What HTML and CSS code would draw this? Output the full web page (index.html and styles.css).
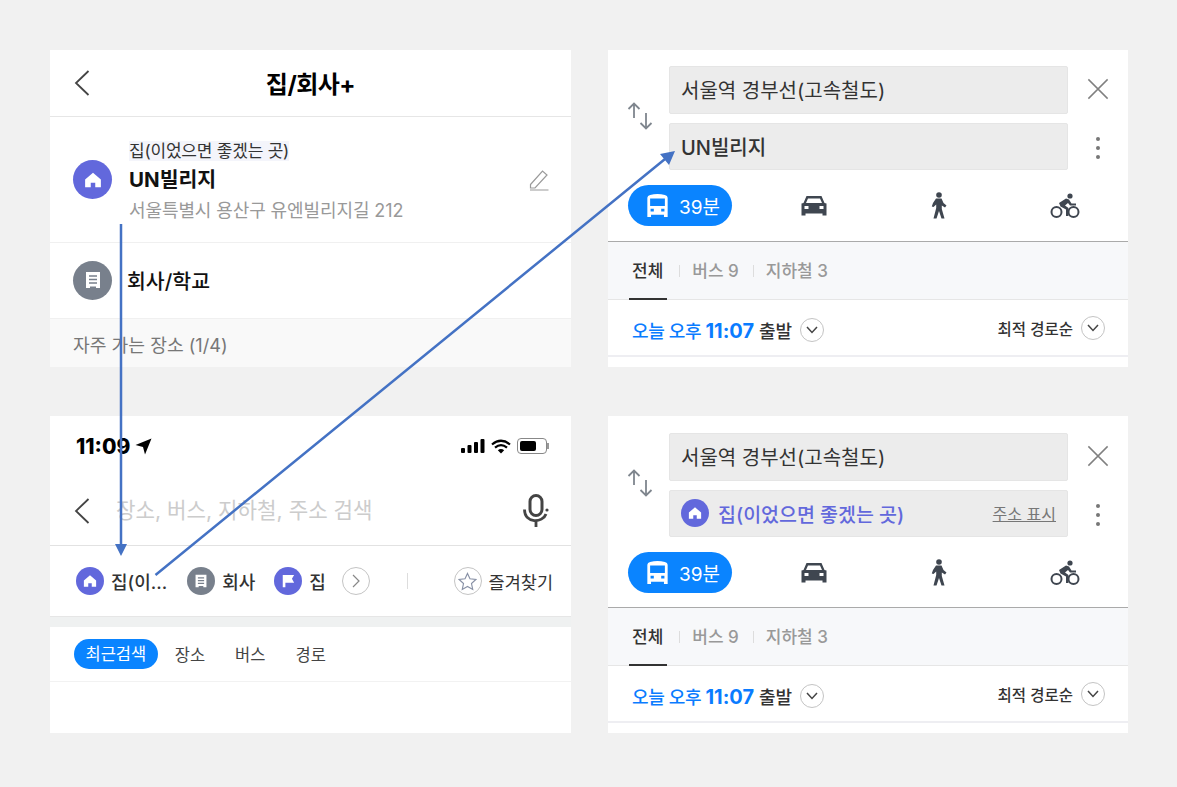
FILE: index.html
```html
<!DOCTYPE html>
<html lang="ko">

<head>
    <meta charset="UTF-8">
    <meta name="viewport" content="width=device-width, initial-scale=1.0">
    <title>집/회사+</title>
    <link rel="stylesheet" href="styles.css">
</head>

<body>
    <svg class="defs" width="0" height="0">
        <symbol id="i-back" viewBox="0 0 16 28"><path d="M14.5 2 2 14l12.500 12" fill="none" stroke="currentColor" stroke-width="1.800"/></symbol>
        <symbol id="i-home" viewBox="0 0 16 16"><path d="M8 1.500 15 7.500V14.500H10V10.500H6V14.500H1V7.500Z" fill="#fff"/></symbol>
        <symbol id="i-doc" viewBox="0 0 16 18"><path d="M1 1H15V17H11V15.500H5V17H1Z" fill="#fff"/><path d="M4 5H12M4 8.500H12M4 12H12" stroke="#78808c" stroke-width="1.500"/></symbol>
        <symbol id="i-swap" viewBox="0 0 26 28"><path d="M7 1.500V16M1.500 7 7 1.500 12.500 7M19 11V26.500M13.500 21 19 26.500 24.500 21" fill="none" stroke="#7f868e" stroke-width="1.800"/></symbol>
        <symbol id="i-close" viewBox="0 0 24 24"><path d="M1.500 1.500 22.500 22.500M22.500 1.500 1.500 22.500" stroke="#808080" stroke-width="1.600"/></symbol>
        <symbol id="i-more" viewBox="0 0 6 24"><circle cx="3" cy="3" r="2" fill="#777"/><circle cx="3" cy="12" r="2" fill="#777"/><circle cx="3" cy="21" r="2" fill="#777"/></symbol>
        <symbol id="i-bus" viewBox="0 0 22 26"><path fill-rule="evenodd" d="M3 1Q11-1 19 1 22 1.500 22 4V25H18V22.500H4V25H0V4Q0 1.500 3 1ZM3 5V13H19V5ZM3.500 16V19H7V16ZM15 16V19H18.500V16Z" fill="#fff"/></symbol>
        <symbol id="i-car" viewBox="0 0 26 20"><path fill-rule="evenodd" d="M5.500 0H20.500L23.500 7 25.500 7.500V19.500H21.500V17.500H4.500V19.500H.5V7.500L2.500 7ZM7 2.500 5 7H21L19 2.500ZM3.500 10V13H7.500V10ZM18.500 10V13H22.500V10Z" fill="#3f4650"/></symbol>
        <symbol id="i-walk" viewBox="0 0 16 27"><circle cx="8" cy="3" r="2.800" fill="#3f4650"/><path d="M5 6.500H10.500L12.500 11 15.500 13.500 14 15.500 10.800 13.500 10.800 17 13.500 26.500H10.500L8 19 5.500 26.500H2.500L5.200 16V12.500L2.500 15 .8 14.500 2 11Z" fill="#3f4650"/></symbol>
        <symbol id="i-bike" viewBox="0 0 30 26"><circle cx="6.500" cy="19" r="5" fill="none" stroke="#3f4650" stroke-width="2"/><circle cx="23.500" cy="19" r="5" fill="none" stroke="#3f4650" stroke-width="2"/><circle cx="20" cy="3" r="2.600" fill="#3f4650"/><path d="M9 10 16 5.500 19 6.500 21.500 10.500H26V12.500H20L18 10 15 12.500 18.500 15V23H16V16.500L10.500 13.500Z" fill="#3f4650"/></symbol>
    </svg>

    <main class="board">
        <section class="panel favorites">
            <header class="title-bar">
                <svg class="back"><use href="#i-back"/></svg>
                <h1>집/회사+</h1>
            </header>
            <div class="place place-home">
                <span class="badge badge-purple badge-lg"><svg><use href="#i-home"/></svg></span>
                <div class="place-text">
                    <span class="place-label">집(이었으면 좋겠는 곳)</span>
                    <strong class="place-name">UN빌리지</strong>
                    <span class="place-addr">서울특별시 용산구 유엔빌리지길 212</span>
                </div>
                <svg class="edit" viewBox="0 0 20 22"><path d="M1.500 15.500 13.500 2 18 6 6 19H1.500ZM1 21H19.500" fill="none" stroke="#9a9a9a" stroke-width="1.200"/></svg>
            </div>
            <div class="place place-work">
                <span class="badge badge-gray badge-lg"><svg><use href="#i-doc"/></svg></span>
                <span class="work-name">회사/학교</span>
            </div>
            <div class="freq">자주 가는 장소 (1/4)</div>
        </section>

        <section class="panel route">
            <div class="route-top">
                <svg class="swap"><use href="#i-swap"/></svg>
                <div class="fields">
                    <div class="field">서울역 경부선(고속철도)</div>
                    <div class="field field-bold">UN빌리지</div>
                </div>
                <div class="route-actions">
                    <svg class="close"><use href="#i-close"/></svg>
                    <svg class="more"><use href="#i-more"/></svg>
                </div>
            </div>
            <div class="modes">
                <span class="mode-pill"><svg><use href="#i-bus"/></svg>39분</span>
                <svg class="mode-car"><use href="#i-car"/></svg>
                <svg class="mode-walk"><use href="#i-walk"/></svg>
                <svg class="mode-bike"><use href="#i-bike"/></svg>
            </div>
            <div class="tabs">
                <span class="tab tab-on">전체</span>
                <span class="tab">버스 9</span>
                <span class="tab">지하철 3</span>
            </div>
            <div class="depart">
                <span class="depart-time"><b>오늘 오후 <em>11:07</em></b> 출발</span>
                <span class="round"><svg viewBox="0 0 12 8"><path d="M1 1 6 6.500 11 1" fill="none" stroke="#444" stroke-width="1.500"/></svg></span>
                <span class="sort">최적 경로순</span>
                <span class="round round-sort"><svg viewBox="0 0 12 8"><path d="M1 1 6 6.500 11 1" fill="none" stroke="#444" stroke-width="1.500"/></svg></span>
            </div>
        </section>

        <section class="panel search">
            <div class="search-main">
                <div class="status">
                    <span class="clock">11:09</span>
                    <svg class="locate" viewBox="0 0 17 17"><path d="M16.500.5 10 16.500 8 9 .5 7Z" fill="#000"/></svg>
                    <svg class="signal" viewBox="0 0 24 14"><rect x="0" y="9" width="4" height="5" rx="1"/><rect x="6.500" y="6" width="4" height="8" rx="1"/><rect x="13" y="3" width="4" height="11" rx="1"/><rect x="19.500" y="0" width="4" height="14" rx="1"/></svg>
                    <svg class="wifi" viewBox="0 0 20 15"><path d="M1 5.500Q10-2 19 5.500M4 8.700Q10 3.500 16 8.700" fill="none" stroke="#000" stroke-width="2.200"/><path d="M10 14.500 6.800 11.300Q10 8.500 13.200 11.300Z"/></svg>
                    <span class="battery"><i></i></span>
                </div>
                <div class="search-bar">
                    <svg class="back"><use href="#i-back"/></svg>
                    <span class="placeholder">장소, 버스, 지하철, 주소 검색</span>
                    <svg class="mic" viewBox="0 0 26 33"><rect x="7" y="1.500" width="12" height="20" rx="6" fill="none" stroke="#444" stroke-width="3"/><path d="M1.500 15.500C1.500 30 20 29 23 20M13 26V33" fill="none" stroke="#444" stroke-width="2.800"/><circle cx="24" cy="16" r="1.600" fill="#444"/></svg>
                </div>
                <div class="chips">
                    <span class="chip chip-first"><span class="badge badge-purple"><svg><use href="#i-home"/></svg></span>집(이...</span>
                    <span class="chip chip-work"><span class="badge badge-gray"><svg><use href="#i-doc"/></svg></span>회사</span>
                    <span class="chip chip-flag"><span class="badge badge-purple"><svg viewBox="0 0 16 16"><path d="M2 1H15L12.500 5.500 15 10H5V15H2Z" fill="#fff"/></svg></span>집</span>
                    <span class="round round-lg"><svg viewBox="0 0 8 14"><path d="M1 1 7 7 1 13" fill="none" stroke="#888" stroke-width="1.200"/></svg></span>
                    <span class="chip-sep"></span>
                    <span class="chip chip-star"><span class="round round-lg"><svg viewBox="0 0 20 20"><path d="M10 1.500 12.600 7.200 18.800 7.900 14.200 12.100 15.500 18.300 10 15.200 4.500 18.300 5.800 12.100 1.200 7.900 7.400 7.200Z" fill="none" stroke="#8790a5" stroke-width="1.200"/></svg></span>즐겨찾기</span>
                </div>
            </div>
            <div class="search-lower">
                <div class="recent">
                    <span class="recent-on">최근검색</span>
                    <span>장소</span>
                    <span>버스</span>
                    <span>경로</span>
                </div>
            </div>
        </section>

        <section class="panel route route-alt">
            <div class="route-top">
                <svg class="swap"><use href="#i-swap"/></svg>
                <div class="fields">
                    <div class="field">서울역 경부선(고속철도)</div>
                    <div class="field field-home">
                        <span class="badge badge-purple"><svg><use href="#i-home"/></svg></span>
                        <span class="field-home-name">집(이었으면 좋겠는 곳)</span>
                        <span class="show-addr">주소 표시</span>
                    </div>
                </div>
                <div class="route-actions">
                    <svg class="close"><use href="#i-close"/></svg>
                    <svg class="more"><use href="#i-more"/></svg>
                </div>
            </div>
            <div class="modes">
                <span class="mode-pill"><svg><use href="#i-bus"/></svg>39분</span>
                <svg class="mode-car"><use href="#i-car"/></svg>
                <svg class="mode-walk"><use href="#i-walk"/></svg>
                <svg class="mode-bike"><use href="#i-bike"/></svg>
            </div>
            <div class="tabs">
                <span class="tab tab-on">전체</span>
                <span class="tab">버스 9</span>
                <span class="tab">지하철 3</span>
            </div>
            <div class="depart">
                <span class="depart-time"><b>오늘 오후 <em>11:07</em></b> 출발</span>
                <span class="round"><svg viewBox="0 0 12 8"><path d="M1 1 6 6.500 11 1" fill="none" stroke="#444" stroke-width="1.500"/></svg></span>
                <span class="sort">최적 경로순</span>
                <span class="round round-sort"><svg viewBox="0 0 12 8"><path d="M1 1 6 6.500 11 1" fill="none" stroke="#444" stroke-width="1.500"/></svg></span>
            </div>
        </section>
    </main>

    <!-- annotation arrows drawn over the panels -->
    <svg class="arrows" viewBox="0 0 1177 787">
        <path d="M121 224V546M155.500 575 665 159" fill="none" stroke="#4472c4" stroke-width="2.500"/>
        <path d="M115 544H127L121 556ZM675 151 669 165 660 154Z" fill="#4472c4"/>
    </svg>
</body>

</html>
```

FILE: styles.css
```css
* {
    box-sizing: border-box;
}

body {
    margin: 0;
    width: 1177px;
    height: 787px;
    position: relative;
    overflow: hidden;
    background-color: #f1f1f1;
    font-family: Inter, "Noto Sans CJK KR", sans-serif;
    color: #222;
}

.defs {
    position: absolute;
}

.board {
    display: grid;
    grid-template-columns: 521px 520px;
    grid-template-rows: 317px 317px;
    column-gap: 37px;
    row-gap: 49px;
    padding: 50px;
}

.panel {
    background-color: #fff;
    display: flex;
    flex-direction: column;
    overflow: hidden;
}

.arrows {
    position: absolute;
    left: 0;
    top: 0;
    width: 1177px;
    height: 787px;
    pointer-events: none;
}

/* badges */
.badge {
    display: flex;
    align-items: center;
    justify-content: center;
    flex: none;
    width: 28px;
    height: 28px;
    border-radius: 50%;
}

.badge svg {
    width: 14px;
    height: 14px;
}

.badge-lg {
    width: 39px;
    height: 39px;
}

.badge-lg svg {
    width: 18px;
    height: 18px;
}

.badge-purple {
    background-color: #6268dc;
}

.badge-gray {
    background-color: #78808c;
}

.round {
    display: flex;
    align-items: center;
    justify-content: center;
    flex: none;
    width: 24px;
    height: 24px;
    border: 1px solid #c4c4c4;
    border-radius: 50%;
}

.round svg {
    width: 12px;
    height: 8px;
}

.round-lg {
    width: 28px;
    height: 28px;
}

.round-lg svg {
    width: 8px;
    height: 14px;
}

.back {
    width: 16px;
    height: 28px;
    flex: none;
    color: #444;
}

/* favorites panel */
.title-bar {
    position: relative;
    display: flex;
    align-items: center;
    justify-content: center;
    height: 67px;
    border-bottom: 1px solid #e6e6e6;
}

.title-bar .back {
    position: absolute;
    left: 24px;
    top: 19px;
}

.title-bar h1 {
    margin: 0 0 1px;
    font-size: 24px;
    font-weight: 700;
    letter-spacing: -0.5px;
    color: #000;
}

.place {
    display: flex;
    align-items: center;
    padding: 0 22px 0 23px;
}

.place-home {
    height: 126px;
    border-bottom: 1px solid #f0f0f0;
}

.place-text {
    display: flex;
    flex-direction: column;
    align-items: flex-start;
    margin-left: 17px;
    padding-top: 6px;
    flex: 1;
}

.place-label {
    font-size: 17px;
    line-height: 20px;
    letter-spacing: -0.2px;
    background-color: #f4f5fb;
    color: #333;
}

.place-name {
    font-size: 20.500px;
    line-height: 37px;
    color: #111;
}

.place-addr {
    font-size: 18px;
    line-height: 26px;
    letter-spacing: -0.1px;
    color: #999;
}

.edit {
    width: 20px;
    height: 22px;
}

.place-work {
    height: 75px;
    padding-bottom: 1px;
}

.work-name {
    margin-left: 15px;
    font-size: 20.500px;
    font-weight: 500;
    color: #111;
}

.freq {
    flex: 1;
    display: flex;
    align-items: center;
    padding: 2px 0 0 23px;
    background-color: #f9f9f9;
    border-top: 1px solid #f0f0f0;
    font-size: 18.200px;
    color: #777;
}

/* route panels */
.route-top {
    display: flex;
    align-items: flex-start;
    height: 131px;
    padding: 16px 17px 0 19px;
}

.route-alt .route-top {
    height: 132px;
    padding-top: 17px;
}

.swap {
    width: 26px;
    height: 28px;
    flex: none;
    margin: 36px 16px 0 0;
}

.fields {
    flex: none;
    width: 399px;
    display: flex;
    flex-direction: column;
    gap: 9px;
}

.field {
    display: flex;
    align-items: center;
    height: 47.500px;
    padding-left: 11px;
    background-color: #ececec;
    border: 1px solid #e5e5e5;
    border-radius: 2px;
    font-size: 20px;
    color: #333;
}

.field-bold {
    font-weight: 500;
}

.field-home {
    padding-right: 11px;
}

.field-home-name {
    flex: 1;
    margin-left: 9px;
    font-size: 19.500px;
    font-weight: 500;
    color: #6268dc;
}

.show-addr {
    font-size: 16px;
    color: #777;
    text-decoration: underline;
}

.route-actions {
    flex: 1;
    display: flex;
    flex-direction: column;
    align-items: center;
    gap: 36px;
    padding: 12px 2px 0 18px;
}

.close {
    width: 22px;
    height: 22px;
}

.more {
    width: 6px;
    height: 24px;
}

.modes {
    display: grid;
    grid-template-columns: 123px 125px 125px 1fr;
    align-items: center;
    justify-items: center;
    height: 61px;
    padding: 0 0 11px 20px;
    border-bottom: 1px solid #aaa;
}

.route-alt .modes {
    height: 60px;
    padding-bottom: 10px;
}

.mode-pill {
    justify-self: start;
    display: flex;
    align-items: center;
    gap: 11px;
    width: 104px;
    height: 41px;
    padding-left: 19px;
    background-color: #0a84ff;
    border-radius: 21px;
    font-size: 19px;
    color: #fff;
}

.mode-pill svg {
    width: 21px;
    height: 24px;
}

.mode-car {
    width: 26px;
    height: 20px;
}

.mode-walk {
    width: 16px;
    height: 27px;
}

.mode-bike {
    width: 30px;
    height: 26px;
}

.tabs {
    display: flex;
    align-items: center;
    height: 58px;
    padding-left: 24px;
    background-color: #f7f8fa;
    border-bottom: 1px solid #e6e6e6;
}

.tab {
    font-size: 17px;
    line-height: 24px;
    font-weight: 500;
    color: #999;
    padding-right: 14px;
}

.tab + .tab {
    padding-left: 13px;
    background: linear-gradient(#ddd, #ddd) left center / 1px 12px no-repeat;
}

.tab-on {
    padding-right: 16px;
    color: #333;
    position: relative;
}

.tab-on::after {
    content: "";
    position: absolute;
    left: -3px;
    width: 38px;
    bottom: -17px;
    height: 2px;
    background-color: #333;
}

.depart {
    display: flex;
    align-items: center;
    height: 57px;
    padding: 4px 23px 0 24px;
    border-bottom: 2px solid #eeeef2;
}

.depart-time {
    font-size: 18px;
    font-weight: 500;
    color: #333;
    margin-right: 8px;
}

.depart-time b {
    font-weight: 500;
    letter-spacing: -0.4px;
    color: #0a7cff;
}

.depart-time em {
    font-style: normal;
    font-size: 20px;
    font-weight: 700;
    letter-spacing: 0;
}

.sort {
    margin: -4px 8px 0 auto;
    font-size: 15.500px;
    font-weight: 500;
    color: #333;
}

.round-sort {
    margin-top: -4px;
}

/* search panel */
.search-main {
    height: 201px;
    border-bottom: 1px solid #e6e6e6;
}

.status {
    display: flex;
    align-items: center;
    height: 60px;
    padding: 0 24px 0 26px;
}

.clock {
    font-size: 21px;
    font-weight: 800;
    color: #000;
}

.locate {
    width: 17px;
    height: 17px;
    margin-left: 5px;
}

.signal {
    width: 24px;
    height: 14px;
    margin-left: auto;
}

.wifi {
    width: 20px;
    height: 15px;
    margin-left: 6px;
}

.battery {
    position: relative;
    width: 30px;
    height: 16px;
    margin-left: 6px;
    padding: 2px;
    border: 1px solid #888;
    border-radius: 4px;
}

.battery::after {
    content: "";
    position: absolute;
    right: -3px;
    top: 4px;
    width: 2px;
    height: 6px;
    background-color: #999;
}

.battery i {
    display: block;
    width: 16px;
    height: 100%;
    background-color: #000;
    border-radius: 2px;
}

.search-bar {
    display: flex;
    align-items: center;
    height: 70px;
    padding: 0 22px 0 24px;
    border-bottom: 1px solid #e2e2e2;
}

.placeholder {
    flex: 1;
    margin: 0 0 4px 26px;
    font-size: 21.200px;
    color: #ccc;
}

.mic {
    width: 26px;
    height: 33px;
}

.chips {
    display: flex;
    align-items: center;
    height: 70px;
    padding: 0 18px 0 26px;
}

.chip {
    display: flex;
    align-items: center;
    gap: 7px;
    font-size: 18px;
    font-weight: 500;
    color: #333;
}

.chip-work {
    margin-left: 20px;
}

.chip-flag {
    margin-left: 19px;
    margin-right: 16px;
}

.chip-sep {
    width: 1px;
    height: 16px;
    margin-left: 37px;
    background-color: #ddd;
}

.chip-star {
    margin-left: auto;
    font-size: 17.500px;
    font-weight: 400;
}

.chip-star svg {
    width: 19px;
    height: 19px;
}

.search-lower {
    flex: 1;
    background-color: #fff;
    border-top: 10px solid #eff1f1;
}

.recent {
    display: flex;
    align-items: center;
    gap: 30px;
    height: 55px;
    padding-left: 24px;
    border-bottom: 1px solid #f2f2f2;
    font-size: 16.500px;
    color: #444;
}

.recent-on {
    margin-right: -13px;
    padding: 0 11.500px;
    line-height: 30px;
    border-radius: 15px;
    background-color: #0a84ff;
    color: #fff;
}
```
